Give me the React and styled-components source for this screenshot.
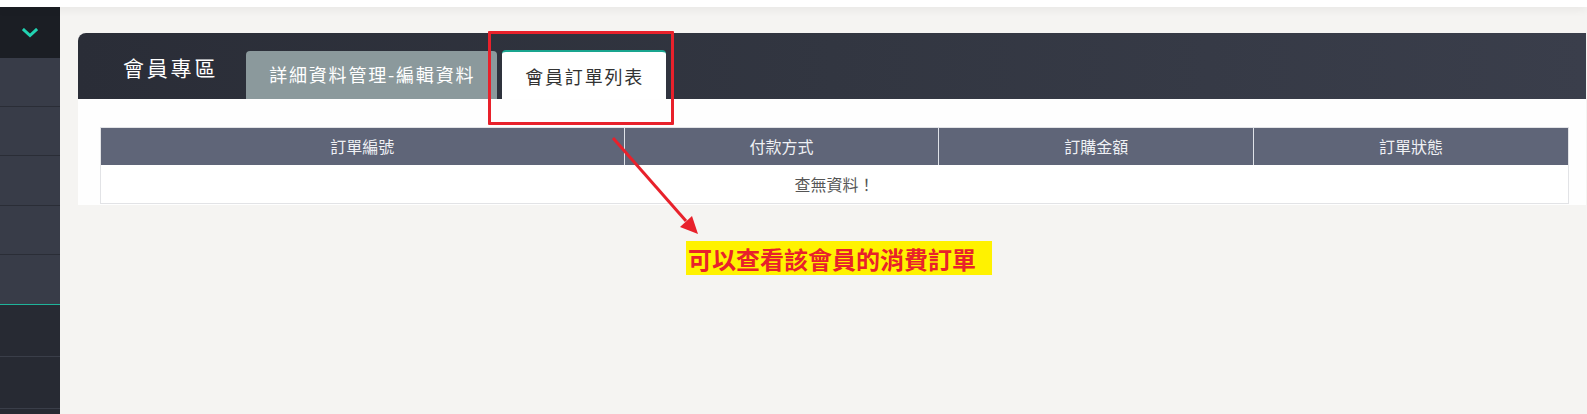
import React from "react";
import styled, { createGlobalStyle } from "styled-components";

const Global = createGlobalStyle`
  html, body { margin: 0; padding: 0; background: #f5f4f2; }
  body { font-family: "Noto Sans CJK TC", "Noto Sans", sans-serif; }
  * { box-sizing: border-box; }
`;

const Page = styled.div`
  position: relative;
  width: 1587px;
  height: 414px;
  overflow: hidden;
  background: #f5f4f2;
  display: flex;
  flex-direction: column;
`;

const TopStrip = styled.div`
  flex: none;
  height: 7px;
  background: #ffffff;
  box-shadow: 0 2px 10px rgba(0, 0, 0, 0.07);
  position: relative;
  z-index: 2;
`;

const Body = styled.div`
  flex: 1;
  min-height: 0;
  display: flex;
  overflow: hidden;
`;

const Sidebar = styled.nav`
  width: 60px;
  flex: none;
  display: flex;
  flex-direction: column;
  background: #272a33;
`;

const SideTop = styled.div`
  flex: none;
  height: 51px;
  background: #1b1e24;
  display: flex;
  align-items: center;
  justify-content: center;
  padding-top: 1px;
`;

const SideRow = styled.div`
  height: ${(p) => p.$h}px;
  flex: none;
  background: ${(p) => (p.$dark ? "#272a33" : "#383c48")};
  border-bottom: 1px solid
    ${(p) => (p.$accent ? "#1fb39a" : p.$dark ? "#3a3e49" : "#2a2d36")};
`;

const Main = styled.main`
  flex: 1;
  padding: 26px 1px 0 18px;
`;

const Panel = styled.section`
  border-top-left-radius: 8px;
  overflow: hidden;
  background: #fefefe;
  padding-bottom: 1px;
`;

const PanelHead = styled.header`
  height: 66px;
  display: flex;
  align-items: flex-end;
  padding-left: 45px;
  background: linear-gradient(90deg, #2a2d37 0%, #323641 50%, #3a3e4b 100%);
`;

const Title = styled.h2`
  margin: 0 28px 0 0;
  align-self: center;
  font-size: 21px;
  font-weight: 400;
  letter-spacing: 2.8px;
  color: #ffffff;
  line-height: 1;
  padding-top: 2px;
`;

const Tabs = styled.div`
  display: flex;
  align-items: flex-end;
  gap: 5px;
`;

const Tab = styled.div`
  height: ${(p) => (p.$active ? 49 : 48)}px;
  padding: 0 22px 0 23px;
  display: flex;
  align-items: center;
  justify-content: center;
  font-size: 18px;
  letter-spacing: 1.8px;
  border-radius: 4px 4px 0 0;
  background: ${(p) => (p.$active ? "#ffffff" : "#8b999c")};
  color: ${(p) => (p.$active ? "#333333" : "#ffffff")};
  border-top: ${(p) => (p.$active ? "2px solid #19a58f" : "none")};
  padding-bottom: ${(p) => (p.$active ? 0 : 2)}px;
  white-space: nowrap;
`;

const PanelBody = styled.div`
  padding: 28px 17px 0 22px;
`;

const Table = styled.table`
  width: 100%;
  border-collapse: collapse;
  border: 1px solid #e2e3e6;
  table-layout: fixed;
  font-size: 16px;
`;

const Th = styled.th`
  height: 37px;
  background: #5f6578;
  color: #eef0f4;
  font-weight: 400;
  text-align: center;
  padding: 0;
  border-left: 1px solid #dfe2e8;
  &:first-child { border-left: none; }
`;

const Td = styled.td`
  height: 39px;
  background: #ffffff;
  color: #555555;
  text-align: center;
  padding: 0;
`;

const Overlay = styled.svg`
  position: absolute;
  left: 0;
  top: 0;
  pointer-events: none;
  z-index: 5;
`;

const HighlightBox = styled.div`
  position: absolute;
  left: 488px;
  top: 31px;
  width: 186px;
  height: 94px;
  border: 3px solid #e8212b;
  border-radius: 1px;
  z-index: 6;
`;

const Note = styled.div`
  position: absolute;
  left: 686px;
  top: 241px;
  height: 34px;
  padding: 0 16px 0 2px;
  display: flex;
  align-items: center;
  background: #fff200;
  color: #e8212b;
  font-size: 24px;
  font-weight: 700;
  z-index: 6;
  white-space: nowrap;
`;

const Chevron = () => (
  <svg width="16" height="10" viewBox="0 0 16 10">
    <polyline
      points="2,2 8,7.5 14,2"
      fill="none"
      stroke="#22d3b2"
      strokeWidth="3"
      strokeLinecap="square"
    />
  </svg>
);

const columns = [
  { label: "訂單編號", width: "35.67%" },
  { label: "付款方式", width: "21.44%" },
  { label: "訂購金額", width: "21.44%" },
  { label: "訂單狀態", width: "21.45%" },
];

const sideRows = [
  { h: 49, dark: false },
  { h: 49, dark: false },
  { h: 50, dark: false },
  { h: 49, dark: false },
  { h: 50, dark: false, accent: true },
  { h: 52, dark: true },
  { h: 52, dark: true },
  { h: 52, dark: true },
];

export default function App() {
  return (
    <>
      <Global />
      <Page>
        <TopStrip />
        <Body>
          <Sidebar>
            <SideTop>
              <Chevron />
            </SideTop>
            {sideRows.map((r, i) => (
              <SideRow key={i} $h={r.h} $dark={r.dark} $accent={r.accent} />
            ))}
          </Sidebar>
          <Main>
            <Panel>
              <PanelHead>
                <Title>會員專區</Title>
                <Tabs>
                  <Tab>詳細資料管理-編輯資料</Tab>
                  <Tab $active>會員訂單列表</Tab>
                </Tabs>
              </PanelHead>
              <PanelBody>
                <Table>
                  <colgroup>
                    {columns.map((c) => (
                      <col key={c.label} style={{ width: c.width }} />
                    ))}
                  </colgroup>
                  <thead>
                    <tr>
                      {columns.map((c) => (
                        <Th key={c.label}>{c.label}</Th>
                      ))}
                    </tr>
                  </thead>
                  <tbody>
                    <tr>
                      <Td colSpan={4}>查無資料！</Td>
                    </tr>
                  </tbody>
                </Table>
              </PanelBody>
            </Panel>
          </Main>
        </Body>

        <HighlightBox />
        <Overlay width="1587" height="414" viewBox="0 0 1587 414">
          <line
            x1="613"
            y1="138"
            x2="686"
            y2="221"
            stroke="#e8212b"
            strokeWidth="3"
          />
          <polygon points="698,234 680,227 692,216" fill="#e8212b" />
        </Overlay>
        <Note>可以查看該會員的消費訂單</Note>
      </Page>
    </>
  );
}
